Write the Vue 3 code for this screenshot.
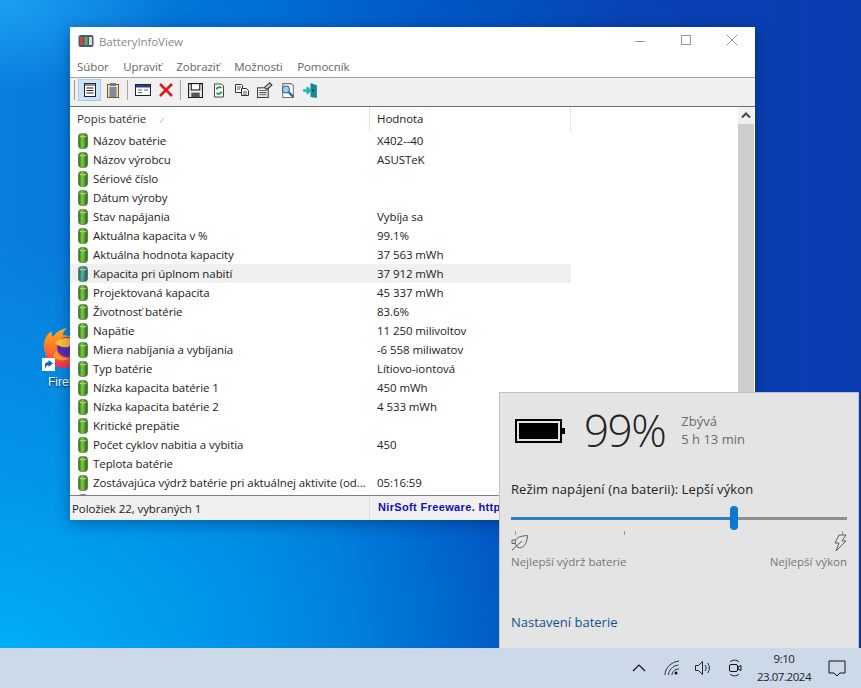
<script setup>
const rows = [
  ['Názov batérie', 'X402--40'],
  ['Názov výrobcu', 'ASUSTeK'],
  ['Sériové číslo', ''],
  ['Dátum výroby', ''],
  ['Stav napájania', 'Vybíja sa'],
  ['Aktuálna kapacita v %', '99.1%'],
  ['Aktuálna hodnota kapacity', '37 563 mWh'],
  ['Kapacita pri úplnom nabití', '37 912 mWh'],
  ['Projektovaná kapacita', '45 337 mWh'],
  ['Životnosť batérie', '83.6%'],
  ['Napätie', '11 250 milivoltov'],
  ['Miera nabíjania a vybíjania', '-6 558 miliwatov'],
  ['Typ batérie', 'Lítiovo-iontová'],
  ['Nízka kapacita batérie 1', '450 mWh'],
  ['Nízka kapacita batérie 2', '4 533 mWh'],
  ['Kritické prepätie', ''],
  ['Počet cyklov nabitia a vybitia', '450'],
  ['Teplota batérie', ''],
  ['Zostávajúca výdrž batérie pri aktuálnej aktivite (od...', '05:16:59'],
  ['', ''],
]
const menu = ['Súbor', 'Upraviť', 'Zobraziť', 'Možnosti', 'Pomocník']
</script>

<template>
  <div class="desktop">
    <div class="shortcut">
      <svg class="fox" width="42" height="44" viewBox="0 0 42 44">
        <defs>
          <linearGradient id="foxbody" x1="0.300" y1="0" x2="0.300" y2="1">
            <stop offset="0" stop-color="#ffb52e" />
            <stop offset="0.450" stop-color="#ff7a22" />
            <stop offset="1" stop-color="#f0305a" />
          </linearGradient>
        </defs>
        <path d="M2 22C1 14 5 8 10 5c-1 3 0 5 1 6 3-5 8-8 14-9-3 3-4 5-4 7 8 0 16 5 19 14 0 11-9 19-19 19S3 33 2 22z" fill="url(#foxbody)" />
        <circle cx="25" cy="21" r="10" fill="#5a2bb5" />
        <path d="M13 17c4-4 8-5 12-5 5 0 9 2 13 6-5-1-9 1-12 3-5 1-10-1-13-4z" fill="#ffc23a" />
        <path d="M14 24c2 6 8 9 14 8-5 4-13 3-17-2z" fill="#ff9a2a" />
      </svg>
      <span class="arrow-box">
        <svg width="11" height="11" viewBox="0 0 11 11"><path d="M2 10V6c0-2 1.500-3 3.500-3V1L10 4.500 5.500 8V6C4 6 3 7.500 2 10z" fill="#1c5fa8" /></svg>
      </span>
      <span class="shortcut-label">Firef</span>
    </div>

    <section class="window">
      <header class="titlebar">
        <svg class="app-icon" width="16" height="14" viewBox="0 0 16 14">
          <rect x="0.500" y="1" width="15" height="12" rx="2" fill="#4a5a78" />
          <rect x="2" y="3" width="3" height="8" fill="#c94a3a" />
          <rect x="6.500" y="3" width="3" height="8" fill="#6fae4a" />
          <rect x="11" y="3" width="3" height="8" fill="#d9d9d9" />
        </svg>
        <span class="title">BatteryInfoView</span>
        <div class="caption">
          <svg width="12" height="12" viewBox="0 0 12 12"><path d="M1 7.500h10" stroke="#9a9a9a" /></svg>
          <svg width="12" height="12" viewBox="0 0 12 12"><rect x="1.500" y="1.500" width="9" height="9" fill="none" stroke="#9a9a9a" /></svg>
          <svg width="12" height="12" viewBox="0 0 12 12"><path d="M1 1l10 10M11 1L1 11" stroke="#9a9a9a" /></svg>
        </div>
      </header>

      <nav class="menu">
        <span v-for="item in menu" :key="item">{{ item }}</span>
      </nav>

      <div class="toolbar">
        <i class="grip"></i>
        <span class="tool active">
          <svg width="16" height="16" viewBox="0 0 16 16"><rect x="2.500" y="1.500" width="11" height="13" fill="#fff" stroke="#222" /><path d="M2.500 3h11" stroke="#222" /><path d="M4.500 6h7M4.500 8.500h7M4.500 11h7" stroke="#222" /></svg>
        </span>
        <span class="tool">
          <svg width="16" height="16" viewBox="0 0 16 16"><rect x="2.500" y="2.500" width="11" height="13" fill="#eee0b8" stroke="#7a5a20" /><rect x="5" y="1" width="6" height="3" fill="#777" /><path d="M4.500 6h7M4.500 8h7M4.500 10h7M4.500 12h7M4.500 14h7" stroke="#1d2f80" /></svg>
        </span>
        <i class="sep"></i>
        <span class="tool">
          <svg width="16" height="16" viewBox="0 0 16 16"><rect x="0.500" y="2.500" width="15" height="11" fill="#fff" stroke="#222" /><rect x="1" y="3" width="14" height="2.500" fill="#27408f" /><path d="M3 8h4M9 8h4M3 10.500h4" stroke="#666" /></svg>
        </span>
        <span class="tool">
          <svg width="16" height="16" viewBox="0 0 16 16"><path d="M2 2l12 12M14 2L2 14" stroke="#d4201c" stroke-width="2.600" /></svg>
        </span>
        <i class="sep"></i>
        <span class="tool">
          <svg width="17" height="17" viewBox="0 0 16 16"><path d="M1.500 1.500h13v13h-13z" fill="#f2f2f2" stroke="#111" /><rect x="4" y="1.500" width="8" height="6" fill="#fff" stroke="#111" /><rect x="4" y="10" width="8" height="4.500" fill="#555" /></svg>
        </span>
        <span class="tool">
          <svg width="16" height="17" viewBox="0 0 16 16"><path d="M3.500 1.500h7l2 2v11h-9z" fill="#fff" stroke="#444" /><path d="M5.500 7a3 3 0 0 1 5-1.500M10.500 9a3 3 0 0 1-5 1.500" fill="none" stroke="#1f9a3c" stroke-width="1.800" /></svg>
        </span>
        <span class="tool">
          <svg width="16" height="16" viewBox="0 0 16 16"><path d="M1.500 2.500h6l1 1v7h-7z" fill="#fff" stroke="#333" /><path d="M7.500 6.500h5l2 2v5h-7z" fill="#fff" stroke="#333" /><path d="M3 5h4M3 7h3M9 10h4M9 12h4" stroke="#555" /></svg>
        </span>
        <span class="tool">
          <svg width="17" height="17" viewBox="0 0 16 16"><rect x="1.500" y="5.500" width="10" height="9" fill="#fff" stroke="#333" /><path d="M3 8h7M3 10h7M3 12h7" stroke="#555" /><path d="M8 5l5-4 2 2-5 4z" fill="#ddd" stroke="#333" /></svg>
        </span>
        <span class="tool">
          <svg width="17" height="17" viewBox="0 0 16 16"><path d="M3.500 1.500h8l2 2v11h-10z" fill="#fff" stroke="#777" /><circle cx="6.500" cy="7" r="3.200" fill="#9cd0ee" stroke="#2a5d9c" /><path d="M9 9.500l4.500 4.500" stroke="#2a5d9c" stroke-width="2" /></svg>
        </span>
        <span class="tool">
          <svg width="17" height="17" viewBox="0 0 16 16"><path d="M8 1l6 2v12l-6-1z" fill="#178a94" /><path d="M1 8h6M4.500 5L7.500 8l-3 3" fill="none" stroke="#1fb5c4" stroke-width="2.200" /><rect x="9.500" y="7" width="1.500" height="2" fill="#063f46" /></svg>
        </span>
      </div>

      <div class="list">
        <div class="table">
          <div class="head">
            <span class="col-a">Popis batérie <em class="sort">⁄</em></span>
            <span class="col-b">Hodnota</span>
          </div>
          <div class="body">
            <div v-for="(row, i) in rows" :key="i" class="row" :class="{ selected: i === 7 }">
              <span class="col-a cell">
                <svg class="cell-icon" width="12" height="16" viewBox="0 0 12 16">
                  <defs>
                    <linearGradient id="cell" x1="0" x2="1" y1="0" y2="0">
                      <stop offset="0" stop-color="#1f6a14" />
                      <stop offset="0.400" stop-color="#84c846" />
                      <stop offset="1" stop-color="#256415" />
                    </linearGradient>
                    <linearGradient id="cell-sel" x1="0" x2="1" y1="0" y2="0">
                      <stop offset="0" stop-color="#1a5f5c" />
                      <stop offset="0.400" stop-color="#5fae9c" />
                      <stop offset="1" stop-color="#1a5566" />
                    </linearGradient>
                  </defs>
                  <rect x="1.500" y="0.500" width="9" height="15" rx="3" :fill="i === 7 ? 'url(#cell-sel)' : 'url(#cell)'" stroke="#3b6a30" stroke-width="0.600" />
                  <path d="M2.500 3c2 1.200 5 1.200 7 0" fill="none" stroke="#d2ecb4" stroke-width="0.800" />
                </svg>
                <span class="cell-text">{{ row[0] }}</span>
              </span>
              <span class="col-b">{{ row[1] }}</span>
            </div>
          </div>
        </div>
        <div class="scrollbar">
          <span class="scroll-btn">
            <svg width="10" height="7" viewBox="0 0 10 7"><path d="M1 5.500l4-4 4 4" fill="none" stroke="#444" stroke-width="2" /></svg>
          </span>
          <div class="thumb"></div>
        </div>
      </div>

      <footer class="status">
        <span class="status-left">Položiek 22, vybraných 1</span>
        <span class="status-right">NirSoft Freeware. http://www.nirsoft.net</span>
      </footer>
    </section>

    <aside class="flyout">
      <div class="charge">
        <svg class="battery" width="50" height="24" viewBox="0 0 50 24">
          <rect x="1" y="1" width="45" height="22" fill="none" stroke="#000" stroke-width="2" />
          <rect x="4" y="4" width="39" height="16" fill="#000" />
          <rect x="47" y="9" width="3" height="6" fill="#000" />
        </svg>
        <span class="percent">99%</span>
        <span class="remain">Zbývá<br />5 h 13 min</span>
      </div>
      <p class="mode">Režim napájení (na baterii): Lepší výkon</p>
      <div class="slider">
        <div class="track-on"></div>
        <div class="track-off"></div>
        <div class="handle"></div>
      </div>
      <div class="ticks"><i></i><i></i><i></i></div>
      <div class="ends">
        <div class="end">
          <svg width="18" height="18" viewBox="0 0 18 18"><path d="M16.500 1.500C10 2 6 3 4.500 6.500c-1 3 .5 6 2.500 7 5 1.500 9-3 9.500-12zM1 16l10-9M1 6h4M1 9.500h3M1 6v3.500" fill="none" stroke="#5e5e5e" /></svg>
          <span>Nejlepší výdrž baterie</span>
        </div>
        <div class="end end-right">
          <svg width="14" height="18" viewBox="0 0 14 18"><path d="M6 1h7L9 7h4L3 17l3-8H2z" fill="none" stroke="#5e5e5e" /></svg>
          <span>Nejlepší výkon</span>
        </div>
      </div>
      <a class="settings">Nastavení baterie</a>
    </aside>

    <footer class="taskbar">
      <svg class="tray-up" width="16" height="10" viewBox="0 0 16 10"><path d="M2 8l6-6 6 6" fill="none" stroke="#111" stroke-width="1.200" /></svg>
      <svg class="tray-wifi" width="16" height="16" viewBox="0 0 16 16">
        <path d="M1 15C1 8 7 2 15 1M4.500 15c0-5 4-9 10-10M8 15c0-3 2.500-6 7-6" fill="none" stroke="#333" />
        <circle cx="12" cy="13" r="1.500" fill="#111" />
      </svg>
      <svg class="tray-sound" width="18" height="16" viewBox="0 0 18 16"><path d="M1.500 5.500h3l4-4v13l-4-4h-3z M11 5c1.500 2 1.500 4 0 6M13.500 3c2.500 3 2.500 7 0 10" fill="none" stroke="#222" /></svg>
      <svg class="tray-cam" width="14" height="20" viewBox="0 0 14 20">
        <path d="M2 4c2-2.500 7-2.500 9 0M2 16c2 2.500 7 2.500 9 0" fill="none" stroke="#222" />
        <rect x="1.500" y="6.500" width="8" height="7" rx="1.500" fill="none" stroke="#111" />
        <path d="M10 9l3-1.500v5L10 11z" fill="none" stroke="#111" />
      </svg>
      <div class="clock"><span>9:10</span><span>23.07.2024</span></div>
      <svg class="notify" width="18" height="17" viewBox="0 0 18 17"><path d="M1 1h16v12h-5l-3 3-3-3H1z" fill="none" stroke="#111" stroke-width="1" /></svg>
    </footer>
  </div>
</template>

<style>
html, body { margin: 0; padding: 0; overflow: hidden; }
</style>

<style scoped>
.desktop {
  position: relative;
  width: 861px;
  height: 688px;
  overflow: hidden;
  background:
    radial-gradient(ellipse 560px 420px at 0 660px, rgba(0, 176, 246, 1) 0%, rgba(0, 160, 238, 0.75) 40%, rgba(0, 130, 225, 0) 100%),
    radial-gradient(ellipse 180px 90px at 0 0, rgba(30, 170, 245, 0.8), rgba(30, 170, 245, 0)),
    linear-gradient(90deg, #0a7ede 0%, #0070d6 30%, #0058c6 50%, #0842b4 75%, #0a3cb0 100%);
  font-family: "Liberation Sans", Arial, sans-serif;
  color: #1a1a1a;
}

.shortcut { position: absolute; left: 38px; top: 326px; width: 60px; height: 66px; }
.fox { position: absolute; left: 4px; top: 0; }
.arrow-box {
  position: absolute; left: 4px; top: 32px; width: 13px; height: 13px;
  background: #fff; display: flex; align-items: center; justify-content: center;
}
.shortcut-label {
  position: absolute; left: 10px; top: 49px;
  color: #fff; font-size: 12px; text-shadow: 0 1px 2px #00305c;
}

.window {
  position: absolute; left: 70px; top: 27px;
  width: 685px; height: 493px;
  background: #fff;
  display: flex; flex-direction: column;
  box-shadow: 0 3px 14px rgba(0, 20, 60, 0.4);
  font-family: "Open Sans", "Liberation Sans", sans-serif;
  font-size: 11.500px;
  letter-spacing: -0.080px;
}
.titlebar { height: 26px; display: flex; align-items: center; padding: 2px 0 0 8px; box-sizing: border-box; }
.app-icon { margin-right: 5px; }
.title { color: #8a8a8a; }
.caption { margin-left: auto; display: flex; gap: 34px; padding-right: 17px; margin-top: -2px; }
.menu { height: 24px; display: flex; gap: 14.500px; align-items: center; padding-left: 7px; color: #666; box-sizing: border-box; padding-top: 2px; }
.toolbar {
  height: 30px; box-sizing: border-box; background: #f0f0f0;
  border-top: 1px solid #a0a0a0; border-bottom: 1px solid #6f6f6f;
  display: flex; align-items: flex-start; padding: 1px 0 0 4px;
}
.grip { width: 1px; height: 20px; background: #9a9a9a; margin: 1px 3px 0 0; }
.tool { width: 23px; height: 22px; display: flex; align-items: center; justify-content: center; box-sizing: border-box; }
.tool.active { background: #cce4f7; border: 1px solid #a8cde9; }
.sep { width: 1px; height: 20px; background: #a8a8a8; margin: 1px 3px 0; }

.list { flex: 1; display: flex; min-height: 0; overflow: hidden; }
.table { flex: 1; min-width: 0; }
.head { height: 24px; display: flex; align-items: center; color: #333; }
.head .col-a { border-right: 1px solid #e5e5e5; height: 24px; line-height: 24px; }
.head .col-b { border-right: 1px solid #e5e5e5; height: 24px; line-height: 24px; }
.sort { font-style: normal; font-size: 8px; color: #777; margin-left: 12px; }
.col-a { width: 300px; padding-left: 7px; box-sizing: border-box; flex: none; }
.col-b { width: 201px; padding-left: 7px; flex: none; box-sizing: border-box; color: #222; }
.row { height: 19px; display: flex; align-items: center; width: 501px; color: #222; }
.row.selected { background: #f0f0f0; }
.cell { display: flex; align-items: center; gap: 4px; white-space: nowrap; }
.cell-text { line-height: 19px; }
.cell-icon { flex: none; }

.scrollbar { width: 16px; background: #f0f0f0; margin-right: 1px; display: flex; flex-direction: column; }
.scroll-btn { height: 17px; display: flex; align-items: center; justify-content: center; }
.thumb { flex: 1; background: #cdcdcd; }

.status {
  height: 25px; background: #f0f0f0; border-top: 1px solid #808080;
  display: flex; align-items: center; box-sizing: border-box; overflow: hidden;
}
.status-left { width: 300px; padding-left: 2px; color: #222; box-sizing: border-box; flex: none; border-right: 1px solid #dcdcdc; line-height: 23px; }
.status-right {
  padding-left: 8px; white-space: nowrap;
  color: #1010b8; font: bold 11px "Liberation Sans", sans-serif;
  letter-spacing: 0.350px; margin-top: -3px;
}

.flyout {
  position: absolute; left: 499px; top: 392px;
  width: 360px; height: 256px;
  background: #e4e4e4; box-sizing: border-box;
  padding: 0 11px; border: 1px solid #c4c4c4; border-bottom: 0;
  font-family: "Open Sans", "Liberation Sans", sans-serif;
}
.charge { display: flex; align-items: center; height: 76px; box-sizing: border-box; margin-left: 4px; }
.battery { flex: none; margin-right: 19px; }
.percent {
  font-size: 44px; font-weight: 300; color: #222; line-height: 60px; margin: -3px 16px 0 0;
  font-family: "Open Sans", sans-serif; letter-spacing: -1.500px;
}
.remain { font-size: 13px; line-height: 18px; color: #6a6a6a; margin-top: -2px; }
.mode { margin: 10px 0 0; font-size: 13px; line-height: 20px; color: #222; letter-spacing: 0.100px; }
.slider { position: relative; display: flex; height: 26px; margin-top: 6px; align-items: center; }
.track-on { width: 222px; height: 3px; background: #2a7fc4; }
.track-off { flex: 1; height: 3px; background: #8f8f8f; }
.handle {
  position: absolute; left: 219px; top: 1px; width: 8px; height: 24px;
  border-radius: 4px; background: #0a78d7;
}
.ticks { display: flex; padding: 0 4px; height: 6px; }
.ticks i { width: 1px; height: 4px; background: #9a9a9a; }
.ticks i:nth-child(2) { margin-left: 108px; }
.ticks i:nth-child(3) { margin-left: auto; }
.ends { display: flex; justify-content: space-between; margin-top: -3px; }
.end { display: flex; flex-direction: column; font-size: 11.500px; color: #777; gap: 2px; line-height: 16px; }
.end-right { align-items: flex-end; }
.settings { display: block; margin-top: 42px; font-size: 13px; color: #15518f; line-height: 20px; }

.taskbar {
  position: absolute; left: 0; right: 0; bottom: 0; height: 40px;
  background: #ccd9e8;
  display: flex; align-items: center; justify-content: flex-end;
  font-family: "Open Sans", "Liberation Sans", sans-serif;
  padding-right: 15px; box-sizing: border-box;
}
.tray-wifi { margin-left: 17px; }
.tray-sound { margin-left: 14px; }
.tray-cam { margin-left: 16px; }
.clock {
  display: flex; flex-direction: column; align-items: center;
  width: 54px; margin-left: 15px;
  font-size: 11.500px; line-height: 18px; color: #222; letter-spacing: -0.450px; white-space: nowrap;
}
.notify { margin-left: 17px; }
</style>
